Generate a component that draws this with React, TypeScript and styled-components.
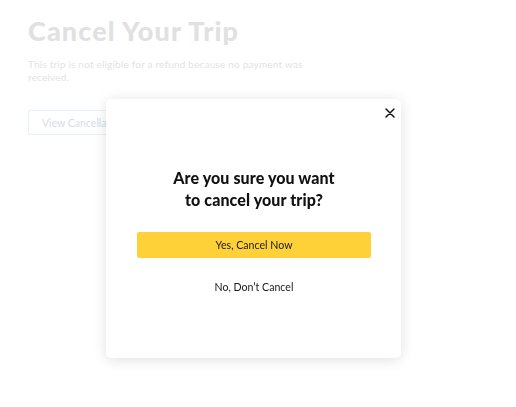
import React from 'react';
import styled, { createGlobalStyle } from 'styled-components';

const GlobalStyle = createGlobalStyle`
  html, body {
    margin: 0;
    padding: 0;
    background: #fff;
  }
  body {
    font-family: Lato, 'Noto Sans', sans-serif;
  }
`;

const Page = styled.div`
  padding: 14px 28px;
  width: 516px;
  height: 407px;
  box-sizing: border-box;
`;

const PageTitle = styled.h1`
  margin: 0;
  font-size: 27px;
  font-weight: 900;
  line-height: 34px;
  color: #e0e0e0;
  letter-spacing: 1.1px;
`;

const PageDesc = styled.p`
  margin: 10px 0 0;
  width: 300px;
  font-size: 10px;
  line-height: 13px;
  color: #e2e2e2;
  letter-spacing: 0.2px;
`;

const GhostButton = styled.button`
  margin-top: 26px;
  height: 25px;
  width: 150px;
  padding: 0 13px;
  text-align: left;
  background: #fff;
  border: 1px solid #e6f0f6;
  border-radius: 2px;
  font-family: Lato, sans-serif;
  font-size: 10.5px;
  color: #d3dde6;
`;

const Overlay = styled.div`
  position: fixed;
  inset: 0;
  display: flex;
  justify-content: center;
  align-items: flex-start;
  padding: 99px 9px 0 0;
  background: rgba(255, 255, 255, 0.05);
`;

const Modal = styled.div`
  position: relative;
  width: 295px;
  height: 259px;
  box-sizing: border-box;
  padding: 68px 30px 0 31px;
  background: #fff;
  border-radius: 5px;
  box-shadow: 0 2px 14px rgba(0, 0, 0, 0.12);
  display: flex;
  flex-direction: column;
  align-items: center;
`;

const CloseButton = styled.button`
  position: absolute;
  top: 7px;
  right: 4px;
  width: 14px;
  height: 14px;
  padding: 0;
  border: 0;
  background: none;
  display: flex;
  align-items: center;
  justify-content: center;
`;

const ModalTitle = styled.h2`
  margin: 0;
  font-size: 16px;
  font-weight: 900;
  line-height: 22px;
  text-align: center;
  color: #111;
  letter-spacing: 0.1px;
`;

const ActionButton = styled.button<{ $primary?: boolean }>`
  width: 100%;
  height: 26px;
  border: 0;
  border-radius: 2px;
  background: ${(p) => (p.$primary ? '#ffd139' : 'transparent')};
  font-family: Lato, sans-serif;
  font-size: 10.6px;
  color: #1a1a1a;
  margin-top: ${(p) => (p.$primary ? '21px' : '16px')};
`;

export default function App() {
  return (
    <>
      <GlobalStyle />
      <Page>
        <PageTitle>Cancel Your Trip</PageTitle>
        <PageDesc>This trip is not eligible for a refund because no payment was received.</PageDesc>
        <GhostButton>View Cancellation Policy</GhostButton>
      </Page>
      <Overlay>
        <Modal>
          <CloseButton aria-label="Close">
            <svg width="10" height="10" viewBox="0 0 10 10">
              <path d="M1 1L9 9M9 1L1 9" stroke="#111" strokeWidth="1.5" strokeLinecap="round" />
            </svg>
          </CloseButton>
          <ModalTitle>
            Are you sure you want
            <br />
            to cancel your trip?
          </ModalTitle>
          <ActionButton $primary>Yes, Cancel Now</ActionButton>
          <ActionButton>No, Don’t Cancel</ActionButton>
        </Modal>
      </Overlay>
    </>
  );
}
